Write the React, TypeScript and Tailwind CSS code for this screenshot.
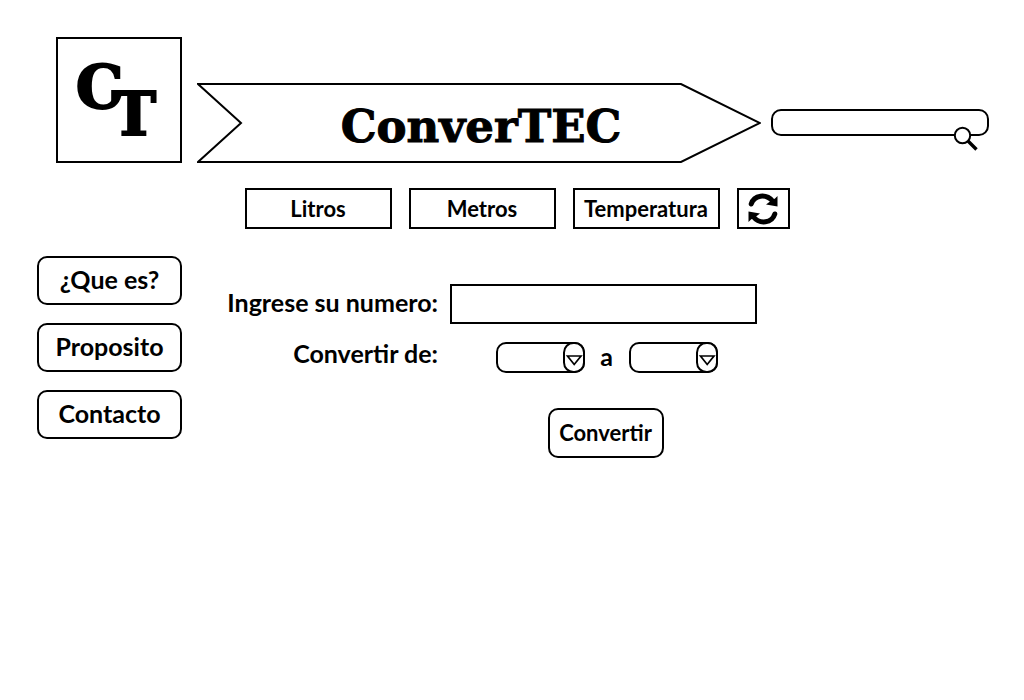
import { useState } from "react";

const sections = ["¿Que es?", "Proposito", "Contacto"];

const units: Record<string, string[]> = {
  Litros: ["ml", "l", "gal"],
  Metros: ["cm", "m", "km"],
  Temperatura: ["°C", "°F", "K"],
};

function Logo() {
  return (
    <a
      href="#"
      aria-label="ConverTEC"
      className="flex size-[126px] shrink-0 items-start justify-center border-2 border-black pr-1.5 font-['DejaVu_Serif','Liberation_Serif',serif] text-[60px] leading-[60px] font-bold [-webkit-text-stroke:2px_black]"
    >
      <span className="pt-[18px]">C</span>
      <span className="-ml-3 pt-[45px]">T</span>
    </a>
  );
}

function Banner() {
  return (
    <div className="relative flex h-20 flex-1 items-center justify-center">
      <svg
        aria-hidden="true"
        viewBox="0 0 564 80"
        preserveAspectRatio="none"
        className="absolute inset-0 h-full w-full"
      >
        <polygon
          points="1,1 484,1 563,40 484,79 1,79 44,40"
          fill="none"
          stroke="black"
          strokeWidth="2"
          vectorEffect="non-scaling-stroke"
        />
      </svg>
      <h1 className="relative pt-1.5 pl-1 font-['DejaVu_Serif','Liberation_Serif',serif] text-[45px] leading-none font-bold [-webkit-text-stroke:1px_black]">
        ConverTEC
      </h1>
    </div>
  );
}

function SearchBox() {
  return (
    <form role="search" className="relative mb-0.5 ml-[10px] w-[218px] shrink-0" onSubmit={(e) => e.preventDefault()}>
      <input
        type="search"
        aria-label="Buscar"
        className="block h-[27px] w-full rounded-[10px] border-2 border-black bg-white px-3 text-sm outline-none"
      />
      <button type="submit" aria-label="Buscar" className="absolute top-[17px] right-[10px]">
        <svg width="26" height="26" viewBox="0 0 26 26">
          <path d="M15 15 L23.5 23.5" stroke="black" strokeWidth="3.4" />
          <circle cx="9.5" cy="9.5" r="7.7" fill="white" stroke="black" strokeWidth="2" />
        </svg>
      </button>
    </form>
  );
}

function UnitSelect({ label, options }: { label: string; options: string[] }) {
  return (
    <div className="relative h-[31px] w-[89px]">
      <select
        aria-label={label}
        defaultValue=""
        className="block h-full w-full appearance-none rounded-[10px] border-2 border-black bg-white pl-2 text-base outline-none"
      >
        <option value="" />
        {options.map((o) => (
          <option key={o}>{o}</option>
        ))}
      </select>
      <svg
        aria-hidden="true"
        width="22"
        height="31"
        viewBox="0 0 22 31"
        className="pointer-events-none absolute top-0 right-0"
      >
        <rect x="1" y="1" width="20" height="29" rx="9.5" fill="white" stroke="black" strokeWidth="2" />
        <path d="M4.5 14 H18 L11.2 22.5 Z" fill="none" stroke="black" strokeWidth="1.7" />
      </svg>
    </div>
  );
}

export default function App() {
  const [kind, setKind] = useState("Litros");

  return (
    <div className="min-h-screen bg-white pt-[37px] font-[Lato,'Noto_Sans',sans-serif] font-bold text-black">
      <header className="flex items-end pr-[35px] pl-14">
        <Logo />
        <div className="ml-[15px] flex flex-1 items-center">
          <Banner />
          <SearchBox />
        </div>
      </header>

      <nav className="mt-[25px] flex justify-center gap-[17px] pl-[10px] text-[22px]">
        {Object.keys(units).map((name) => (
          <button
            key={name}
            type="button"
            onClick={() => setKind(name)}
            className="h-[41px] w-[147px] border-2 border-black leading-none"
          >
            {name}
          </button>
        ))}
        <button
          type="reset"
          form="converter"
          aria-label="Reiniciar"
          className="flex h-[41px] w-[53px] items-center justify-center border-2 border-black"
        >
          <svg width="30" height="32" viewBox="0 0 30 32">
            <path d="M3.2 11 C6 2 18 0 25 8.5" fill="none" stroke="black" strokeWidth="5" strokeLinecap="round" />
            <path d="M29.5 3 V13.5 L18 11.5 L22 8.5 L27 5.5 Z" fill="black" />
            <path d="M26.8 21 C24 30 12 32 5 23.5" fill="none" stroke="black" strokeWidth="5" strokeLinecap="round" />
            <path d="M0.5 29 V18.5 L12 20.5 L8 23.5 L3 26.5 Z" fill="black" />
          </svg>
        </button>
      </nav>

      <div className="mt-[27px] flex items-start pl-[37px]">
        <aside className="flex w-[145px] shrink-0 flex-col gap-[18px] text-[25px]">
          {sections.map((name) => (
            <button key={name} type="button" className="h-[49px] rounded-[10px] border-2 border-black pb-0.5 leading-none">
              {name}
            </button>
          ))}
        </aside>

        <form
          id="converter"
          onSubmit={(e) => e.preventDefault()}
          className="mt-7 ml-10 grid grid-cols-[216px_307px] grid-rows-[40px_31px_auto] items-center gap-x-3 gap-y-[18px] text-[25px] leading-none"
        >
          <label htmlFor="amount" className="pb-1 text-right whitespace-nowrap">
            Ingrese su numero:
          </label>
          <input
            id="amount"
            type="text"
            inputMode="decimal"
            className="h-10 w-full border-2 border-black bg-white px-3 text-xl outline-none"
          />
          <span className="pb-2 text-right">Convertir de:</span>
          <div className="flex items-center justify-center pl-1.5">
            <UnitSelect label="Convertir de" options={units[kind]} />
            <span className="w-11 pb-0.5 text-center">a</span>
            <UnitSelect label="Convertir a" options={units[kind]} />
          </div>
          <div className="col-start-2 mt-[17px] flex justify-center pl-1">
            <button
              type="submit"
              className="h-[50px] w-[116px] rounded-[10px] border-2 border-black text-[22px] leading-none"
            >
              Convertir
            </button>
          </div>
        </form>
      </div>
    </div>
  );
}
